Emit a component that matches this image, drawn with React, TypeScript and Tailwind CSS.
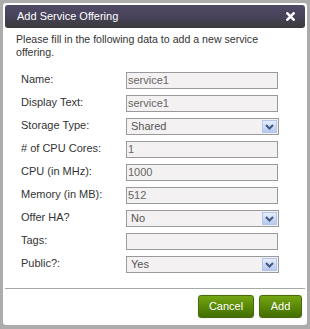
import React from "react";

const Chevron = () => (
  <svg width="9" height="6" viewBox="0 0 9 6">
    <path d="M1 1 L4.5 4.5 L8 1" fill="none" stroke="#44587f" strokeWidth="2" />
  </svg>
);

function TextField({ value }: { value: string }) {
  return (
    <div className="w-[152px] h-[17px] border border-[#9a9a9a] bg-[#f3f1f1] text-[#666] pl-[1px] leading-[15px] overflow-hidden">
      {value}
    </div>
  );
}

function SelectField({ value }: { value: string }) {
  return (
    <div className="w-[153px] h-[17px] border border-[#9a9a9a] bg-[#f3f1f1] text-[#555] flex items-center justify-between pl-[4px] pr-[1px]">
      <span className="leading-[15px]">{value}</span>
      <div className="w-[15px] h-[13px] bg-gradient-to-b from-[#e6edfb] to-[#b6c9ef] border border-[#b3c5e8] flex items-center justify-center">
        <Chevron />
      </div>
    </div>
  );
}

const rows: { label: string; value: string; select?: boolean }[] = [
  { label: "Name:", value: "service1" },
  { label: "Display Text:", value: "service1" },
  { label: "Storage Type:", value: "Shared", select: true },
  { label: "# of CPU Cores:", value: "1" },
  { label: "CPU (in MHz):", value: "1000" },
  { label: "Memory (in MB):", value: "512" },
  { label: "Offer HA?", value: "No", select: true },
  { label: "Tags:", value: "" },
  { label: "Public?:", value: "Yes", select: true },
];

export default function App() {
  return (
    <div
      className="w-[310px] h-[329px] bg-[#acacac] pt-[3px] pl-[3px] text-[11px]"
      style={{ fontFamily: '"Liberation Sans", Arial, sans-serif' }}
    >
      <div className="w-[304px] h-[322px] bg-white rounded-[3px] p-[2px] flex flex-col">
        <div className="h-[23px] rounded-[3px] bg-gradient-to-b from-[#504a66] via-[#48435a] to-[#3a3a3a] flex items-center justify-between pl-[12px] pr-[10px]">
          <span className="text-white text-[11px] leading-none">Add Service Offering</span>
          <svg width="9" height="9" viewBox="0 0 10 10">
            <path d="M1.5 1.5 L8.5 8.5 M8.5 1.5 L1.5 8.5" stroke="#fff" strokeWidth="2.8" strokeLinecap="square" />
          </svg>
        </div>
        <p className="mt-[5px] pl-[11px] pr-[10px] text-[#333] text-[10.6px] leading-[13px]">
          Please fill in the following data to add a new service offering.
        </p>
        <div className="mt-[13px] pl-[16px] flex flex-col">
          {rows.map((r) => (
            <div key={r.label} className="h-[23px] flex items-start">
              <div className="w-[105px] text-[#333] leading-[13px] pt-[1px]">{r.label}</div>
              {r.select ? <SelectField value={r.value} /> : <TextField value={r.value} />}
            </div>
          ))}
        </div>
        <div className="mt-[9px] h-px bg-[#a8a8a8]" />
        <div className="mt-[6px] flex justify-end gap-[5px] pr-[3px]">
          <button className="w-[56px] h-[23px] rounded-[3px] border border-[#4a6b0c] bg-gradient-to-b from-[#74a513] to-[#426e00] text-white text-[11px] shadow-[0_0_1px_#999]">
            Cancel
          </button>
          <button className="w-[43px] h-[23px] rounded-[3px] border border-[#4a6b0c] bg-gradient-to-b from-[#74a513] to-[#426e00] text-white text-[11px] shadow-[0_0_1px_#999]">
            Add
          </button>
        </div>
      </div>
    </div>
  );
}
